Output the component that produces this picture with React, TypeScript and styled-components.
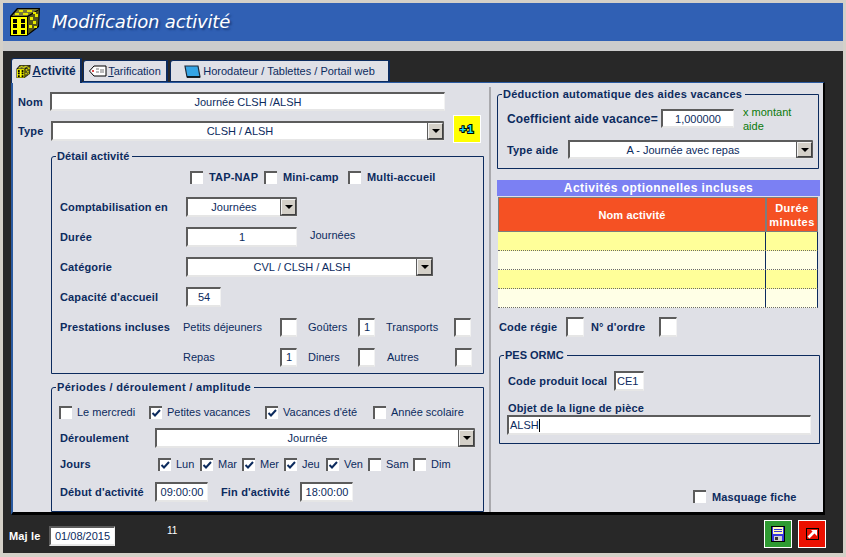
import React from 'react'
import styled, { createGlobalStyle } from 'styled-components'

const GlobalStyle = createGlobalStyle`
  html, body {
    margin: 0;
    padding: 0;
    background: #282828;
  }
  * {
    box-sizing: border-box;
  }
`

const NAVY = '#0c2b5e'
const PANEL = '#dfe0e6'

const Window = styled.div`
  width: 846px;
  height: 557px;
  display: flex;
  flex-direction: column;
  background: #282828;
  border-style: solid;
  border-width: 3px 3px 4px 3px;
  border-color: #d4d0c8;
  font-family: "Liberation Sans", Arial, sans-serif;
  font-size: 11px;
  color: ${NAVY};
  overflow: hidden;
`

const TitleBar = styled.div`
  height: 38px;
  flex: none;
  display: flex;
  align-items: center;
  padding-left: 6px;
  background: #3060b4;
`

const TitleText = styled.div`
  margin-left: 11px;
  margin-top: -1px;
  font-family: "DejaVu Sans", sans-serif;
  font-style: italic;
  font-size: 18px;
  letter-spacing: -0.2px;
  color: #fff;
  text-shadow: 2px 2px 2px #1c3f80;
`

const Band = styled.div`
  height: 10px;
  flex: none;
  background: #cccccc;
`

const Tabs = styled.div`
  height: 31px;
  flex: none;
  display: flex;
  align-items: flex-end;
  padding-left: 8px;
`

const Tab = styled.div<{ $w: number; $active?: boolean; $gap?: number }>`
  width: ${p => p.$w}px;
  height: ${p => (p.$active ? 25 : 22)}px;
  margin-left: ${p => p.$gap ?? 0}px;
  margin-bottom: ${p => (p.$active ? -1 : 0)}px;
  z-index: ${p => (p.$active ? 1 : 0)};
  display: flex;
  align-items: center;
  justify-content: center;
  gap: 1px;
  position: relative;
  background: ${PANEL};
  border: 1px solid ${NAVY};
  border-bottom: ${p => (p.$active ? 'none' : `1px solid ${NAVY}`)};
  border-right-width: 2px;
  border-top-left-radius: 3px;
  font-weight: ${p => (p.$active ? 700 : 400)};
  white-space: nowrap;
  font-size: ${p => (p.$active ? 12 : 11)}px;
`

const Panel = styled.div`
  width: 814px;
  height: 433px;
  margin-left: 8px;
  flex: none;
  display: flex;
  background: ${PANEL};
  border-top: 1px solid #2a5aa0;
  border-left: 2px solid #2a5aa0;
  border-right: 2px solid #000;
  border-bottom: 3px solid #000;
`

const LeftCol = styled.div`
  width: 478px;
  height: 425px;
  margin-top: 4px;
  padding-top: 5px;
  padding-left: 5px;
  flex: none;
  border-right: 2px solid #a9a9ad;
`

const RightCol = styled.div`
  flex: 1;
  padding: 11px 0 0 6px;
`

const Row = styled.div<{ $h?: number; $top?: number; $left?: number }>`
  display: flex;
  align-items: center;
  height: ${p => p.$h ?? 20}px;
  margin-top: ${p => p.$top ?? 0}px;
  margin-left: ${p => p.$left ?? 0}px;
`

const Label = styled.span<{ $w?: number; $left?: number; $size?: number }>`
  flex: none;
  width: ${p => (p.$w ? `${p.$w}px` : 'auto')};
  margin-left: ${p => p.$left ?? 0}px;
  font-weight: 700;
  font-size: ${p => p.$size ?? 11}px;
  white-space: nowrap;
  letter-spacing: 0.15px;
`

const Plain = styled.span<{ $w?: number; $left?: number; $up?: number }>`
  flex: none;
  width: ${p => (p.$w ? `${p.$w}px` : 'auto')};
  margin-left: ${p => p.$left ?? 0}px;
  margin-top: ${p => -(p.$up ?? 0)}px;
  white-space: nowrap;
`

const Field = styled.div<{ $w: number; $h?: number; $left?: number; $align?: string }>`
  flex: none;
  width: ${p => p.$w}px;
  height: ${p => p.$h ?? 20}px;
  margin-left: ${p => p.$left ?? 0}px;
  display: flex;
  align-items: center;
  justify-content: ${p => p.$align ?? 'center'};
  padding: 0 1px;
  background: #fff;
  border-style: solid;
  border-width: 2px 1px 2px 2px;
  border-color: #5c5c5c #f2f2f2 #e6e6e6 #5c5c5c;
  white-space: nowrap;
`

const Caret = styled.span`
  width: 1px;
  height: 13px;
  background: #000;
`

const SelectBox = styled.div<{ $w: number; $h?: number }>`
  flex: none;
  position: relative;
  width: ${p => p.$w}px;
  height: ${p => p.$h ?? 20}px;
  padding-right: 16px;
  display: flex;
  align-items: center;
  justify-content: center;
  background: #fff;
  border-style: solid;
  border-width: 2px 1px 2px 2px;
  border-color: #5c5c5c #f2f2f2 #e6e6e6 #5c5c5c;
  white-space: nowrap;
`

const SelectArrow = styled.div`
  position: absolute;
  top: 0;
  right: 0;
  width: 15px;
  height: 100%;
  display: flex;
  align-items: center;
  justify-content: center;
  background: #d4d0c8;
  border-style: solid;
  border-width: 1px;
  border-color: #f4f4f4 #404040 #404040 #f4f4f4;
  outline: 1px solid #5c5c5c;
  &::after {
    content: '';
    border-style: solid;
    border-width: 4px 4px 0 4px;
    border-color: #000 transparent transparent transparent;
  }
`

const Select = ({ w, h, children }: { w: number; h?: number; children: React.ReactNode }) => (
  <SelectBox $w={w} $h={h}>
    {children}
    <SelectArrow />
  </SelectBox>
)

const PlusOne = styled.div`
  flex: none;
  width: 28px;
  height: 28px;
  margin-left: 9px;
  margin-top: -4px;
  display: flex;
  align-items: center;
  justify-content: center;
  background: #ffff00;
  border: 1px solid #fff;
  font-weight: 700;
  font-size: 11px;
  letter-spacing: 1px;
  color: #19e0ff;
  -webkit-text-stroke: 2px #000;
  paint-order: stroke fill;
`

const Box = styled.div<{ $w: number; $h: number; $top?: number; $left?: number }>`
  position: relative;
  width: ${p => p.$w}px;
  height: ${p => p.$h}px;
  margin-top: ${p => p.$top ?? 0}px;
  margin-left: ${p => p.$left ?? 0}px;
  border: 1px solid ${NAVY};
  border-top-left-radius: 3px;
`

const Legend = styled.div<{ $ls?: number }>`
  position: absolute;
  top: -7px;
  left: 4px;
  padding: 0 3px 0 1px;
  line-height: 13px;
  background: ${PANEL};
  font-weight: 700;
  letter-spacing: ${p => p.$ls ?? 0.1}px;
  white-space: nowrap;
`

const BoxBody = styled.div<{ $top: number; $left?: number; $gap?: number }>`
  display: flex;
  flex-direction: column;
  gap: ${p => p.$gap ?? 0}px;
  padding-top: ${p => p.$top}px;
  padding-left: ${p => p.$left ?? 8}px;
`

const Tick = styled.span`
  flex: none;
  width: 13px;
  height: 13px;
  display: block;
  background: #fff;
  border-style: solid;
  border-width: 2px 0 0 2px;
  border-color: #5c5c5c;
  svg {
    display: block;
  }
`

const CheckItem = styled.div<{ $w?: number; $gap?: number }>`
  flex: none;
  display: flex;
  align-items: center;
  gap: ${p => p.$gap ?? 5}px;
  width: ${p => (p.$w ? `${p.$w}px` : 'auto')};
  white-space: nowrap;
`

const Check = ({ on, w, gap, bold, children }: { on?: boolean; w?: number; gap?: number; bold?: boolean; children: string }) => (
  <CheckItem $w={w} $gap={gap}>
    <Tick>
      {on && (
        <svg width="11" height="11" viewBox="0 0 11 11">
          <path d="M1.5 5 L4 7.5 L9 2" fill="none" stroke="#0c2b5e" strokeWidth="2" />
        </svg>
      )}
    </Tick>
    {bold ? <Label>{children}</Label> : <Plain>{children}</Plain>}
  </CheckItem>
)

const GreenNote = styled.div`
  flex: none;
  width: 60px;
  margin-left: 9px;
  color: #0a7a0a;
  line-height: 14px;
  font-size: 11px;
`

const TableTitle = styled.div`
  width: 323px;
  height: 16px;
  margin-top: 11px;
  margin-bottom: 1px;
  display: flex;
  align-items: center;
  justify-content: center;
  background: #7b80f3;
  color: #fff;
  font-weight: 700;
  font-size: 12px;
  letter-spacing: 0.45px;
`

const OptionTable = styled.div`
  width: 320px;
  margin-left: 1px;
`

const TableHead = styled.div`
  display: grid;
  grid-template-columns: 268px 52px;
  height: 35px;
`

const HeadCell = styled.div<{ $ls?: number }>`
  display: flex;
  align-items: center;
  justify-content: center;
  text-align: center;
  line-height: 14px;
  background: #f55123;
  color: #fff;
  font-weight: 700;
  letter-spacing: ${p => p.$ls ?? 0.15}px;
  border: 1px solid #7d7d7d;
`

const TableRow = styled.div<{ $odd: boolean }>`
  display: grid;
  grid-template-columns: 268px 51px;
  height: 19px;
  width: 320px;
  background: ${p => (p.$odd ? '#ffff99' : '#ffffe6')};
  border-bottom: 1px dotted #6a6a6a;
  border-right: 1px solid ${NAVY};
`

const TableCell = styled.div`
  &:first-child {
    border-right: 1px solid ${NAVY};
  }
`

const Footer = styled.div`
  flex: 1;
  display: flex;
  align-items: flex-start;
  padding: 11px 17px 0 6px;
  color: #fff;
`

const FooterLabel = styled.span`
  width: 40px;
  margin-top: 4px;
  font-weight: 700;
  letter-spacing: 0.15px;
`

const Counter = styled.span`
  margin-left: 52px;
  margin-top: -1px;
  font-size: 10px;
`

const FooterField = styled(Field)`
  color: ${NAVY};
`

const ActionButton = styled.div<{ $bg: string; $left?: string }>`
  width: 28px;
  height: 28px;
  margin-top: -6px;
  margin-left: ${p => p.$left ?? '6px'};
  display: flex;
  align-items: center;
  justify-content: center;
  background: ${p => p.$bg};
  border: 1px solid #fff;
`

const Icon = styled.svg<{ $right?: number }>`
  flex: none;
  margin-right: ${p => p.$right ?? 0}px;
`

const DiceIcon = ({ size }: { size: number }) => (
  <Icon width={size} height={size} viewBox="0 0 32 30">
    <path d="M1 9 L8 1 L31 1 L30 20 L18 29 L1 29 Z" fill="#000" />
    <path d="M2 10 L18 10 L18 28 L2 28 Z" fill="#ffff00" />
    <path d="M3 9 L9 2 L30 2 L18 9 Z" fill="#77773a" />
    <path d="M19 10 L30 3 L29 19 L19 27 Z" fill="#55551c" />
    <g fill="#000">
      <rect x="4" y="12" width="4" height="4" />
      <rect x="12" y="12" width="4" height="4" />
      <rect x="4" y="17" width="4" height="4" />
      <rect x="12" y="17" width="4" height="4" />
      <rect x="4" y="23" width="4" height="4" />
      <rect x="12" y="23" width="4" height="4" />
    </g>
    <g fill="#e8e800">
      <rect x="10" y="3" width="4" height="2" />
      <rect x="18" y="3" width="5" height="2" />
      <rect x="6" y="6" width="4" height="2" />
      <rect x="14" y="6" width="5" height="2" />
      <rect x="24" y="5" width="3" height="2" />
      <rect x="21" y="10" width="3" height="3" />
      <rect x="26" y="7" width="3" height="3" />
      <rect x="24" y="14" width="3" height="3" />
      <rect x="20" y="18" width="3" height="3" />
      <rect x="25" y="19" width="3" height="2" />
    </g>
  </Icon>
)

const TagIcon = () => (
  <Icon width="18" height="12" viewBox="0 0 18 12">
    <path d="M5 1 L17 1 L17 11 L5 11 L0.5 6 Z" fill="#fff" stroke="#000" />
    <circle cx="4" cy="6" r="1" fill="#d01010" />
    <path d="M7 4 H10 M7 7 H10 M12 4 V8 M14 4 V8" stroke="#777" strokeWidth="1" />
  </Icon>
)

const TabletIcon = () => (
  <Icon width="17" height="13" viewBox="0 0 17 13" $right={1}>
    <path d="M1 1 L14 1 L16 12 L3 12 Z" fill="#35a5e5" stroke="#1d2b3a" strokeWidth="1.2" />
    <path d="M3 12 L16 12" stroke="#000" strokeWidth="1.5" />
  </Icon>
)

const SaveIcon = () => (
  <svg width="14" height="16" viewBox="0 0 14 16">
    <rect x="0" y="0" width="14" height="16" fill="#000" />
    <rect x="1" y="1" width="12" height="14" fill="#3636e0" />
    <rect x="2" y="1" width="10" height="7" fill="#fff8c0" />
    <path d="M3 3.5 H11 M3 5.5 H11" stroke="#3636e0" />
    <rect x="3" y="10" width="8" height="5" fill="#d0d0d0" />
    <rect x="4" y="11" width="3" height="3" fill="#333" />
  </svg>
)

const ExitIcon = () => (
  <svg width="13" height="12" viewBox="0 0 13 12">
    <rect x="0.5" y="0.5" width="12" height="11" fill="#ec1000" stroke="#000" strokeWidth="1" />
    <path d="M2.5 9.5 L8.5 3.5" fill="none" stroke="#fff" strokeWidth="2.6" />
    <path d="M5 2 H11 V8 Z" fill="#fff" />
  </svg>
)

const days: [string, boolean, number][] = [
  ['Lun', true, 42],
  ['Mar', true, 42],
  ['Mer', true, 42],
  ['Jeu', true, 42],
  ['Ven', true, 42],
  ['Sam', false, 45],
  ['Dim', false, 42],
]

export default function App() {
  return (
    <>
      <GlobalStyle />
      <Window>
        <TitleBar>
          <DiceIcon size={32} />
          <TitleText>Modification activité</TitleText>
        </TitleBar>
        <Band />
        <Tabs>
          <Tab $w={71} $active>
            <DiceIcon size={15} />
            <span><u>A</u>ctivité</span>
          </Tab>
          <Tab $w={85} $gap={1}>
            <TagIcon />
            <span><u>T</u>arification</span>
          </Tab>
          <Tab $w={220} $gap={2}>
            <TabletIcon />
            <span>Horodateur / Tablettes / Portail web</span>
          </Tab>
        </Tabs>
        <Panel>
          <LeftCol>
            <Row $h={19}>
              <Label $w={32}>Nom</Label>
              <Field $w={395} $h={19}>Journée CLSH /ALSH</Field>
            </Row>
            <Row $top={10}>
              <Label $w={33}>Type</Label>
              <Select w={393}>CLSH / ALSH</Select>
              <PlusOne>+1</PlusOne>
            </Row>
            <Box $w={433} $h={218} $top={15} $left={33}>
              <Legend>Détail activité</Legend>
              <BoxBody $top={10} $gap={10}>
                <Row>
                  <Plain $w={130} />
                  <Check w={74} gap={6} bold>TAP-NAP</Check>
                  <Check w={84} gap={6} bold>Mini-camp</Check>
                  <Check gap={6} bold>Multi-accueil</Check>
                </Row>
                <Row>
                  <Label $w={126}>Comptabilisation en</Label>
                  <Select w={111}>Journées</Select>
                </Row>
                <Row>
                  <Label $w={126}>Durée</Label>
                  <Field $w={111}>1</Field>
                  <Plain $left={13} $up={4}>Journées</Plain>
                </Row>
                <Row>
                  <Label $w={126}>Catégorie</Label>
                  <Select w={247}>CVL / CLSH / ALSH</Select>
                </Row>
                <Row>
                  <Label $w={126}>Capacité d'accueil</Label>
                  <Field $w={35}>54</Field>
                </Row>
                <Row>
                  <Label $w={123}>Prestations incluses</Label>
                  <Plain $w={97}>Petits déjeuners</Plain>
                  <Field $w={17} $h={19} />
                  <Plain $w={50} $left={11}>Goûters</Plain>
                  <Field $w={17} $h={19}>1</Field>
                  <Plain $w={68} $left={11}>Transports</Plain>
                  <Field $w={17} $h={19} />
                </Row>
                <Row>
                  <Plain $w={97} $left={123}>Repas</Plain>
                  <Field $w={17} $h={19}>1</Field>
                  <Plain $w={50} $left={11}>Diners</Plain>
                  <Field $w={17} $h={19} />
                  <Plain $w={68} $left={12}>Autres</Plain>
                  <Field $w={17} $h={19} />
                </Row>
              </BoxBody>
            </Box>
            <Box $w={433} $h={125} $top={13} $left={33}>
              <Legend $ls={0.33}>Périodes / déroulement / amplitude</Legend>
              <BoxBody $top={14} $gap={6}>
                <Row $left={-1}>
                  <Check w={90}>Le mercredi</Check>
                  <Check w={116} on>Petites vacances</Check>
                  <Check w={108} on>Vacances d'été</Check>
                  <Check>Année scolaire</Check>
                </Row>
                <Row>
                  <Label $w={95}>Déroulement</Label>
                  <Select w={320}>Journée</Select>
                </Row>
                <Row>
                  <Label $w={98}>Jours</Label>
                  {days.map(([name, on, w]) => (
                    <Check key={name} on={on} w={w}>{name}</Check>
                  ))}
                </Row>
                <Row $top={2}>
                  <Label $w={95}>Début d'activité</Label>
                  <Field $w={53}>09:00:00</Field>
                  <Label $w={79} $left={13}>Fin d'activité</Label>
                  <Field $w={53}>18:00:00</Field>
                </Row>
              </BoxBody>
            </Box>
          </LeftCol>
          <RightCol>
            <Box $w={322} $h={75}>
              <Legend $ls={0.28}>Déduction automatique des aides vacances</Legend>
              <BoxBody $top={14} $left={9} $gap={12}>
                <Row $h={19}>
                  <Label $w={154} $size={12}>Coefficient aide vacance=</Label>
                  <Field $w={73} $h={19}>1,000000</Field>
                  <GreenNote>x montant aide</GreenNote>
                </Row>
                <Row $h={19}>
                  <Label $w={61}>Type aide</Label>
                  <Select w={245} h={19}>A - Journée avec repas</Select>
                </Row>
              </BoxBody>
            </Box>
            <TableTitle>Activités optionnelles incluses</TableTitle>
            <OptionTable>
              <TableHead>
                <HeadCell>Nom activité</HeadCell>
                <HeadCell $ls={0.5}>Durée minutes</HeadCell>
              </TableHead>
              {[true, false, true, false].map((odd, i) => (
                <TableRow key={i} $odd={odd}>
                  <TableCell />
                  <TableCell />
                </TableRow>
              ))}
            </OptionTable>
            <Row $top={9} $left={2}>
              <Label $w={67}>Code régie</Label>
              <Field $w={18} />
              <Label $w={68} $left={7}>N° d'ordre</Label>
              <Field $w={18} />
            </Row>
            <Box $w={321} $h={89} $top={18} $left={2}>
              <Legend $ls={0}>PES ORMC</Legend>
              <BoxBody $top={15}>
                <Row>
                  <Label $w={106}>Code produit local</Label>
                  <Field $w={30} $align="flex-start">CE1</Field>
                </Row>
                <Row $h={14} $top={10}>
                  <Label>Objet de la ligne de pièce</Label>
                </Row>
                <Row $h={20} $left={-1}>
                  <Field $w={304} $align="flex-start">ALSH<Caret /></Field>
                </Row>
              </BoxBody>
            </Box>
            <Row $h={13} $top={46} $left={196}>
              <Check gap={6} bold>Masquage fiche</Check>
            </Row>
          </RightCol>
        </Panel>
        <Footer>
          <FooterLabel>Maj le</FooterLabel>
          <FooterField $w={66}>01/08/2015</FooterField>
          <Counter>11</Counter>
          <ActionButton $bg="#2e9a32" $left="auto"><SaveIcon /></ActionButton>
          <ActionButton $bg="#ec1000"><ExitIcon /></ActionButton>
        </Footer>
      </Window>
    </>
  )
}
